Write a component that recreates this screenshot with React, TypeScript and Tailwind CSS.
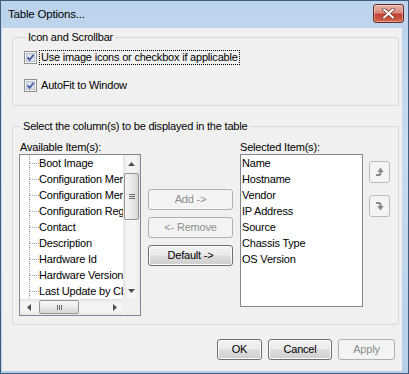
import React from "react";

const btnOn =
  "h-[21px] flex items-center justify-center rounded-[3px] border border-[#707070] text-black bg-[linear-gradient(to_bottom,#f2f2f2_0%,#ebebeb_48%,#dddddd_52%,#cfcfcf_100%)] shadow-[inset_0_0_0_1px_#fbfbfb]";
const btnOff =
  "h-[21px] flex items-center justify-center rounded-[3px] border border-[#adb2b5] text-[#8d8d8d] bg-[#f4f4f4]";

function Check() {
  return (
    <svg width="13" height="13" viewBox="0 0 13 13" className="shrink-0">
      <rect x="0.5" y="0.5" width="12" height="12" fill="#f5f5f5" stroke="#8f8f8f" />
      <rect x="2.5" y="2.5" width="8" height="8" fill="#dde3ed" stroke="#b7c1d0" />
      <path d="M3.6 6.4 L5.6 8.9 L9.6 3.7" fill="none" stroke="#3d56a3" strokeWidth="1.7" />
    </svg>
  );
}

function TreeRow({ text }: { text: string }) {
  return (
    <div className="h-[16px] flex items-center whitespace-nowrap">
      <svg width="19" height="16" className="shrink-0">
        <line x1="9.5" y1="0" x2="9.5" y2="16" stroke="#9a9a9a" strokeDasharray="1 1" shapeRendering="crispEdges" />
        <line x1="10" y1="8.5" x2="19" y2="8.5" stroke="#9a9a9a" strokeDasharray="1 1" shapeRendering="crispEdges" />
      </svg>
      <span>{text}</span>
    </div>
  );
}

function ArrowV({ down }: { down?: boolean }) {
  return (
    <div className="h-[17px] flex items-center justify-center shrink-0">
      <svg width="7" height="4" viewBox="0 0 7 4">
        <polygon points={down ? "0,0 7,0 3.5,4" : "3.5,0 7,4 0,4"} fill="#4e4e4e" />
      </svg>
    </div>
  );
}

function ArrowH({ right }: { right?: boolean }) {
  return (
    <div className="w-[17px] flex items-center justify-center shrink-0">
      <svg width="4" height="7" viewBox="0 0 4 7">
        <polygon points={right ? "0,0 4,3.5 0,7" : "4,0 0,3.5 4,7"} fill="#4e4e4e" />
      </svg>
    </div>
  );
}

function MoveIcon({ down }: { down?: boolean }) {
  return down ? (
    <svg width="9" height="10" viewBox="0 0 9 10">
      <path d="M1 2 H3.5 Q5.5 2 5.5 4 V5.5" fill="none" stroke="#8a8a8a" strokeWidth="2.2" />
      <polygon points="2.3,5 8.7,5 5.5,9.5" fill="#8a8a8a" />
    </svg>
  ) : (
    <svg width="9" height="10" viewBox="0 0 9 10">
      <path d="M1 8 H3.5 Q5.5 8 5.5 6 V4.5" fill="none" stroke="#8a8a8a" strokeWidth="2.2" />
      <polygon points="2.3,5 8.7,5 5.5,0.5" fill="#8a8a8a" />
    </svg>
  );
}

const available = [
  "Boot Image",
  "Configuration Memory",
  "Configuration Memory",
  "Configuration Register",
  "Contact",
  "Description",
  "Hardware Id",
  "Hardware Version",
  "Last Update by CLI",
];

const selected = ["Name", "Hostname", "Vendor", "IP Address", "Source", "Chassis Type", "OS Version"];

export default function App() {
  return (
    <div className="w-[409px] h-[374px] flex flex-col border border-[#3f5d7e] bg-[linear-gradient(to_bottom,#bcd3ec,#c9dcf0_40%,#b7cfe9)] font-['Liberation_Sans',Arial,sans-serif] text-[11px] tracking-[-0.2px] text-black overflow-hidden">
      {/* Title bar */}
      <div className="h-[27px] flex items-start justify-between shrink-0">
        <div className="pl-[7px] leading-[26px] text-[11.5px] text-black">Table Options...</div>
        <div className="mt-[3px] mr-[4px] w-[31px] h-[19px] rounded-[3px] border border-[#6b2b22] bg-[linear-gradient(to_bottom,#e9b4a9_0%,#d98b7d_45%,#c2402f_55%,#d36a4f_100%)] shadow-[inset_0_0_0_1px_rgba(255,255,255,0.35)] flex items-center justify-center">
          <svg width="13" height="11" viewBox="0 0 13 11">
            <path d="M2 1.5 L11 9.5 M11 1.5 L2 9.5" stroke="#6f2a20" strokeWidth="3.6" strokeLinecap="round" />
            <path d="M2 1.5 L11 9.5 M11 1.5 L2 9.5" stroke="#ffffff" strokeWidth="2.2" strokeLinecap="round" />
          </svg>
        </div>
      </div>

      {/* Body */}
      <div className="ml-[1px] mr-[6px] h-[343px] bg-[#f0f0f0] flex flex-col">
        {/* Group 1 */}
        <fieldset className="ml-[10px] mr-[3px] mt-[3px] border border-[#d5d9dd] rounded-[3px] pl-[11px] pt-[5px] pb-[12px]">
          <legend className="ml-[2px] px-[2px] leading-[13px]">Icon and Scrollbar</legend>
          <div className="h-[16px] flex items-center">
            <Check />
            <span className="ml-[2px] px-[1px] h-[15px] leading-[13px] border border-dotted border-black">
              Use image icons or checkbox if applicable
            </span>
          </div>
          <div className="mt-[12px] h-[16px] flex items-center">
            <Check />
            <span className="ml-[2px] px-[2px] leading-[13px]">AutoFit to Window</span>
          </div>
        </fieldset>

        {/* Group 2 */}
        <fieldset className="ml-[10px] mr-[3px] mt-[14px] border border-[#d5d9dd] rounded-[3px] pl-[6px] pt-[8px] pb-[8px]">
          <legend className="ml-[2px] px-[2px] leading-[13px]">Select the column(s) to be displayed in the table</legend>
          <div className="flex items-start">
            {/* Available */}
            <div className="w-[122px] flex flex-col">
              <div className="leading-[13px] h-[13px] pl-[1px]">Available Item(s):</div>
              <div className="h-[162px] border border-[#828790] bg-white flex flex-col">
                <div className="h-[144px] flex">
                  <div className="flex-1 overflow-hidden">
                    {available.map((t, i) => (
                      <TreeRow key={i} text={t} />
                    ))}
                  </div>
                  <div className="w-[17px] flex flex-col bg-[linear-gradient(to_right,#e3e3e3,#f4f4f4_25%,#f4f4f4_75%,#e6e6e6)]">
                    <ArrowV />
                    <div className="mt-[1px] mx-[1px] h-[47px] rounded-[2px] border border-[#969696] bg-[linear-gradient(to_right,#f6f6f6,#e9e9e9_50%,#d6d6d6)] flex flex-col items-center justify-center gap-[1px]">
                      <div className="w-[6px] h-[1px] bg-[#6b6b6b]" />
                      <div className="w-[6px] h-[1px] bg-[#6b6b6b]" />
                      <div className="w-[6px] h-[1px] bg-[#6b6b6b]" />
                    </div>
                    <div className="flex-1" />
                    <ArrowV down />
                  </div>
                </div>
                <div className="h-[16px] flex">
                  <div className="flex-1 flex bg-[linear-gradient(to_bottom,#e3e3e3,#f4f4f4_25%,#f4f4f4_75%,#e6e6e6)]">
                    <ArrowH />
                    <div className="ml-[2px] my-[1px] w-[40px] rounded-[2px] border border-[#969696] bg-[linear-gradient(to_bottom,#f6f6f6,#e9e9e9_50%,#d6d6d6)] flex items-center justify-center gap-[1px]">
                      <div className="w-[1px] h-[5px] bg-[#6b6b6b]" />
                      <div className="w-[1px] h-[5px] bg-[#6b6b6b]" />
                      <div className="w-[1px] h-[5px] bg-[#6b6b6b]" />
                    </div>
                    <div className="flex-1" />
                    <ArrowH right />
                  </div>
                  <div className="w-[17px] bg-[#f0f0f0]" />
                </div>
              </div>
            </div>

            {/* Middle buttons */}
            <div className="ml-[7px] mt-[48px] w-[85px] flex flex-col gap-[7px]">
              <div className={btnOff}>Add -&gt;</div>
              <div className={btnOff}>&lt;- Remove</div>
              <div className={btnOn}>Default -&gt;</div>
            </div>

            {/* Selected */}
            <div className="ml-[7px] w-[123px] flex flex-col">
              <div className="leading-[13px] h-[13px]">Selected Item(s):</div>
              <div className="h-[153px] border border-[#828790] bg-white pl-[1px]">
                {selected.map((t) => (
                  <div key={t} className="h-[16px] leading-[16px] whitespace-nowrap">
                    {t}
                  </div>
                ))}
              </div>
            </div>

            {/* Up / down */}
            <div className="ml-[6px] mt-[20px] flex flex-col gap-[12px]">
              <div className="w-[21px] h-[22px] rounded-[3px] border border-[#b9bcbf] bg-[#f4f4f4] flex items-center justify-center">
                <MoveIcon />
              </div>
              <div className="w-[21px] h-[22px] rounded-[3px] border border-[#b9bcbf] bg-[#f4f4f4] flex items-center justify-center">
                <MoveIcon down />
              </div>
            </div>
          </div>
        </fieldset>

        {/* Bottom buttons */}
        <div className="mt-[14px] pr-[7px] flex justify-end gap-[6px]">
          <div className={`${btnOn} w-[45px]`}>OK</div>
          <div className={`${btnOn} w-[64px]`}>Cancel</div>
          <div className={`${btnOff} w-[57px]`}>Apply</div>
        </div>
      </div>
    </div>
  );
}
